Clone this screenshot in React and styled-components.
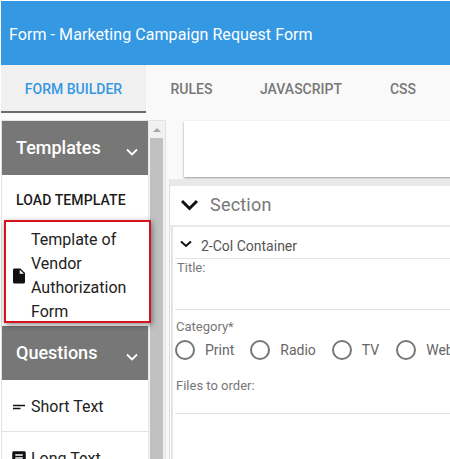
import React from 'react';
import styled, { createGlobalStyle } from 'styled-components';

const GlobalStyle = createGlobalStyle`
  html, body {
    margin: 0;
    padding: 0;
    height: 100%;
    background: #fff;
    overflow: hidden;
  }
  * {
    box-sizing: border-box;
  }
`;

const Page = styled.div`
  width: 450px;
  height: 459px;
  padding: 1px 0 0 1px;
  overflow: hidden;
  display: flex;
  flex-direction: column;
  font-family: Roboto, "Liberation Sans", sans-serif;
  background: #fff;
`;

const Header = styled.div`
  flex: none;
  width: 700px;
  height: 64px;
  padding: 2px 8px 0;
  display: flex;
  align-items: center;
  background: #3498e3;
  color: #fff;
  font-size: 16px;
  letter-spacing: 0.07px;
`;

const Tabs = styled.div`
  flex: none;
  height: 48px;
  display: flex;
  background: #f9f9f9;
`;

const Tab = styled.div`
  width: ${(p) => p.$width}px;
  padding-top: 2px;
  display: flex;
  align-items: center;
  justify-content: center;
  font-size: 14px;
  font-weight: 500;
  text-transform: uppercase;
  color: ${(p) => (p.$active ? '#3498e3' : '#777')};
  background: ${(p) => (p.$active ? '#f0f0f0' : 'transparent')};
  border-bottom: 2px solid ${(p) => (p.$active ? '#6b6b6b' : 'transparent')};
`;

const Body = styled.div`
  flex: 1;
  min-height: 0;
  display: flex;
  padding-top: 7px;
  background: #f9f9f9;
`;

const Sidebar = styled.div`
  flex: none;
  width: 165px;
  display: flex;
  border: 1px solid #e3e3e3;
  border-bottom: 0;
  background: #fff;
`;

const Panels = styled.div`
  width: 146px;
  flex: none;
`;

const PanelHead = styled.div`
  height: 54px;
  padding: 0 10px 2px 14px;
  display: flex;
  justify-content: space-between;
  align-items: center;
  background: #777;
  color: #fff;
  font-size: 18px;
  font-weight: 500;
`;

const HeadChevron = styled.svg`
  width: 12px;
  height: 8px;
  margin-top: 10px;
  fill: none;
  stroke: #fff;
  stroke-width: 1.8;
`;

const LoadRow = styled.div`
  height: 45px;
  padding: 4px 0 0 14px;
  display: flex;
  align-items: center;
  font-size: 14px;
  font-weight: 500;
  letter-spacing: 0.1px;
  color: #1c1c1c;
`;

const TemplateItem = styled.div`
  width: 147px;
  height: 103px;
  margin-left: 2px;
  padding: 9px 0 0 4px;
  display: flex;
  align-items: center;
  gap: 3px;
  position: relative;
  background: #fff;
  border: 2px solid #d3141f;
  box-shadow: 1px 2px 6px rgba(0, 0, 0, 0.45);
  font-size: 16px;
  line-height: 24px;
  color: #222;
`;

const ItemText = styled.div`
  width: 105px;
`;

const QuestionsHead = styled(PanelHead)`
  margin-top: 3px;
`;

const QuestionRow = styled.div`
  height: ${(p) => p.$height}px;
  padding: 2px 0 0 8px;
  display: flex;
  align-items: center;
  gap: 3px;
  border-bottom: 1px solid #e2e2e2;
  font-size: 16px;
  color: #222;
`;

const ItemIcon = styled.svg`
  flex: none;
  width: 18px;
  height: 18px;
  fill: #111;
`;

const Scrollbar = styled.div`
  flex: 1;
  display: flex;
  flex-direction: column;
  padding-left: 1px;
  background: #f1f1f1;
  border-left: 1px solid #e8e8e8;
`;

const ScrollArrow = styled.div`
  flex: none;
  margin: 7px 0 6px 3px;
  width: 0;
  height: 0;
  border-left: 4px solid transparent;
  border-right: 4px solid transparent;
  border-bottom: 4px solid #a8a8a8;
`;

const ScrollThumb = styled.div`
  flex: 1;
  width: 13px;
  background: #c1c1c1;
`;

const Main = styled.div`
  flex: 1;
  min-width: 0;
  padding: 1px 0 0 3px;
`;

const TopCard = styled.div`
  width: 400px;
  height: 56px;
  margin-left: 15px;
  background: #fff;
  box-shadow: 0 1px 2px rgba(0, 0, 0, 0.4);
`;

const SectionCard = styled.div`
  width: 400px;
  height: 300px;
  margin-top: 2px;
  background: #fff;
  border: 1px solid #dcdcdc;
  border-top: 7px solid #e9e9e9;
  border-bottom: 0;
`;

const SectionHead = styled.div`
  height: 41px;
  padding: 0 0 2px 10px;
  display: flex;
  align-items: center;
  gap: 11px;
  font-size: 18px;
  letter-spacing: 0.2px;
  color: #777;
  border-bottom: 2px solid #e8e8e8;
`;

const SectionChevron = styled.svg`
  width: 19px;
  height: 12px;
  fill: none;
  stroke: #111;
  stroke-width: 3;
`;

const Container = styled.div`
  margin-left: 1px;
  padding-left: 2px;
  height: 260px;
  border-left: 2px solid #e4e4e4;
`;

const ContainerHead = styled.div`
  height: 32px;
  padding: 6px 0 0 5px;
  display: flex;
  align-items: center;
  gap: 9px;
  font-size: 14px;
  color: #555;
  border-bottom: 1px solid #e4e4e4;
`;

const SmallChevron = styled.svg`
  width: 12px;
  height: 8px;
  margin-top: -4px;
  fill: none;
  stroke: #111;
  stroke-width: 2;
`;

const Field = styled.div`
  height: ${(p) => p.$height}px;
  padding: ${(p) => p.$top || 0}px 0 0 ${(p) => p.$left}px;
  font-size: 13px;
  line-height: 16px;
  color: #777;
  border-bottom: ${(p) => (p.$ruled ? '1px solid #e2e2e2' : '0')};
`;

const CategoryField = styled(Field)`
  padding-top: 9px;
`;

const Radios = styled.div`
  margin: 5px 0 0 -1px;
  display: flex;
  align-items: center;
  color: #666;
  font-size: 14px;
  white-space: nowrap;
`;

const Radio = styled.span`
  flex: none;
  width: 20px;
  height: 20px;
  margin-right: 10px;
  border: 2px solid #777;
  border-radius: 50%;
`;

const RadioLabel = styled.span`
  margin-right: ${(p) => p.$gap}px;
`;

const options = [
  { label: 'Print', gap: 16 },
  { label: 'Radio', gap: 16 },
  { label: 'TV', gap: 17 },
  { label: 'Web', gap: 0 },
];

const Down = () => <path d="M1 1.5 L6 6.5 L11 1.5" />;

export default function App() {
  return (
    <>
      <GlobalStyle />
      <Page>
        <Header>Form - Marketing Campaign Request Form</Header>
        <Tabs>
          <Tab $active $width={145}>Form Builder</Tab>
          <Tab $width={91}>Rules</Tab>
          <Tab $width={128}>JavaScript</Tab>
          <Tab $width={76}>CSS</Tab>
        </Tabs>
        <Body>
          <Sidebar>
            <Panels>
              <PanelHead>
                Templates
                <HeadChevron viewBox="0 0 12 8"><Down /></HeadChevron>
              </PanelHead>
              <LoadRow>LOAD TEMPLATE</LoadRow>
              <TemplateItem>
                <ItemIcon viewBox="0 0 24 24">
                  <path d="M6 2c-1.1 0-1.99.9-1.99 2L4 20c0 1.1.89 2 1.99 2H18c1.1 0 2-.9 2-2V8l-6-6H6zm7 7V3.5L18.5 9H13z" />
                </ItemIcon>
                <ItemText>Template of Vendor Authorization Form</ItemText>
              </TemplateItem>
              <QuestionsHead>
                Questions
                <HeadChevron viewBox="0 0 12 8"><Down /></HeadChevron>
              </QuestionsHead>
              <QuestionRow $height={52}>
                <ItemIcon viewBox="0 0 24 24">
                  <path d="M4 9h16v2H4zm0 4h10v2H4z" />
                </ItemIcon>
                Short Text
              </QuestionRow>
              <QuestionRow $height={51}>
                <ItemIcon viewBox="0 0 24 24">
                  <path d="M19 3H5c-1.1 0-2 .9-2 2v14c0 1.1.9 2 2 2h14c1.1 0 2-.9 2-2V5c0-1.1-.9-2-2-2zm-5 14H7v-2h7v2zm3-4H7v-2h10v2zm0-4H7V7h10v2z" />
                </ItemIcon>
                Long Text
              </QuestionRow>
            </Panels>
            <Scrollbar>
              <ScrollArrow />
              <ScrollThumb />
            </Scrollbar>
          </Sidebar>
          <Main>
            <TopCard />
            <SectionCard>
              <SectionHead>
                <SectionChevron viewBox="0 0 19 12"><path d="M2 2 L9.5 9.5 L17 2" /></SectionChevron>
                Section
              </SectionHead>
              <Container>
                <ContainerHead>
                  <SmallChevron viewBox="0 0 12 8"><path d="M1 1.5 L6 6 L11 1.5" /></SmallChevron>
                  2-Col Container
                </ContainerHead>
                <Field $height={51} $top={1} $left={2} $ruled>Title:</Field>
                <CategoryField $height={68} $left={1}>
                  Category*
                  <Radios>
                    {options.map((o) => (
                      <React.Fragment key={o.label}>
                        <Radio />
                        <RadioLabel $gap={o.gap}>{o.label}</RadioLabel>
                      </React.Fragment>
                    ))}
                  </Radios>
                </CategoryField>
                <Field $height={36} $left={1} $ruled>Files to order:</Field>
              </Container>
            </SectionCard>
          </Main>
        </Body>
      </Page>
    </>
  );
}
